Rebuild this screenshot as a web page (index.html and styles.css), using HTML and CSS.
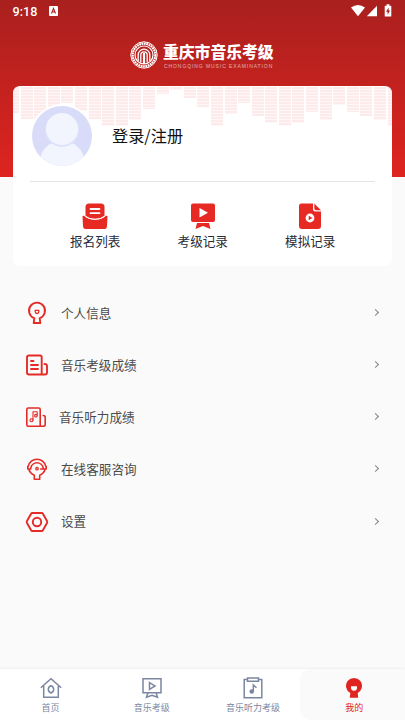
FILE: index.html
```
<!DOCTYPE html>
<html lang="zh-CN">
<head>
<meta charset="utf-8">
<title>我的</title>
<link rel="stylesheet" href="styles.css">
</head>
<body>
<header class="hero">
  <div class="status">
    <span class="time">9:18</span>
    <svg class="ime" width="9" height="10" viewBox="0 0 9 10"><rect width="9" height="10" rx="1" fill="#fff"/><path d="M2.5 7.5 4.5 2.5l2 5M3.2 6h2.600" fill="none" stroke="#aa2220" stroke-width="1.1"/></svg>
    <svg class="signals" width="42" height="14" viewBox="0 0 42 14" fill="#fff"><path d="M0 3.600Q7-1.400 14 3.600L7 12.200Z"/><path d="M26 1.800v10.400H15.800Z"/><path d="M35.600.3h2.800v1.400h1.300q.6 0 .6.6v9.600q0 .6-.6.6h-5.400q-.6 0-.6-.6V2.300q0-.6.6-.6h1.300Z"/><path d="M37.600 3.500 35 7.700h1.600v3l2.500-4.300h-1.500Z" fill="#aa2220"/></svg>
  </div>
  <div class="brand">
    <svg width="28" height="28" viewBox="0 0 28 28" fill="none" stroke="#fff"><circle cx="14" cy="14" r="13.200" stroke-width="1"/><circle cx="14" cy="14" r="11.300" stroke-width="2.200" stroke-dasharray="1.800 .6"/><circle cx="14" cy="14" r="9" stroke-width="1.200"/><path d="M8.200 20v-6a5.800 5.800 0 0 1 11.600 0v6M10.800 21.500V14a3.200 3.200 0 0 1 6.400 0v7.500" stroke-width="1.300"/><path d="M14 12v11" stroke-width="2.200"/></svg>
    <div class="wordmark"><span class="brand-cn">重庆市音乐考级</span><span class="brand-en">CHONGQING MUSIC EXAMINATION</span></div>
  </div>
</header>
<main>
  <section class="card">
    <div class="bars">
      <i style="height:26px"></i><i style="height:32px"></i><i style="height:32px"></i><i style="height:24px"></i><i style="height:16px"></i><i style="height:24px"></i><i style="height:32px"></i><i style="height:39px"></i><i style="height:39px"></i><i style="height:33px"></i><i style="height:22px"></i><i style="height:7px"></i><i style="height:3px"></i><i style="height:11px"></i><i style="height:20px"></i><i style="height:39px"></i><i style="height:27px"></i><i style="height:16px"></i><i style="height:29px"></i><i style="height:36px"></i><i style="height:39px"></i><i style="height:36px"></i><i style="height:25px"></i><i style="height:33px"></i><i style="height:18px"></i><i style="height:25px"></i><i style="height:29px"></i><i style="height:33px"></i><i style="height:39px"></i>
    </div>
    <div class="profile">
      <svg class="avatar" width="64" height="64" viewBox="0 0 64 64"><defs><clipPath id="face"><circle cx="32" cy="32" r="30"/></clipPath></defs><circle cx="32" cy="32" r="32" fill="#fff"/><circle cx="32" cy="32" r="30" fill="#d9dcf9"/><g clip-path="url(#face)"><ellipse cx="32" cy="57" rx="22" ry="20" fill="#f2f5fe"/><circle cx="32" cy="26" r="17" fill="#dfe3fa"/><circle cx="32" cy="25" r="16" fill="#f2f5fe"/></g></svg>
      <span class="login">登录/注册</span>
    </div>
    <div class="shortcuts">
      <div class="shortcut"><svg width="26" height="26" viewBox="0 0 26 26" fill="#e72924"><path d="M3.500 13V4q0-3.500 3.500-3.500h12Q22.500.5 22.500 4v9l-5.500 3H9Z"/><path d="M8.500 6h9M8.500 10.200h9" stroke="#fff" stroke-width="1.800" stroke-linecap="round"/><path d="M.5 13.500q0-1.200 1.600-.7Q6 16.700 13 16.700t10.900-3.900q1.600-.5 1.600.7L25 23q-.2 3-2.500 3h-19Q1.200 26 1 23Z"/><path d="M3 13Q7 16.200 13 16.200T23 13" fill="none" stroke="#fff" stroke-width="1"/></svg><span>报名列表</span></div>
      <div class="shortcut"><svg width="26" height="26" viewBox="0 0 26 26" fill="#e72924"><rect x="1" y=".5" width="24" height="18.500" rx="2"/><path d="M9.500 5 18 9.800l-8.500 4.800Z" fill="#fff"/><path d="M7 20h12l1.500 6L13 23l-7.500 3Z"/></svg><span>考级记录</span></div>
      <div class="shortcut"><svg width="26" height="26" viewBox="0 0 26 26" fill="#e72924"><path d="M4.500.5H16V6q0 2.500 2.500 2.500H24V23q0 3-3 3H5q-3 0-3-3V3Q2 .5 4.500.5Z"/><path d="M17.300.5 24 7.300h-4.700q-2 0-2-2Z"/><circle cx="13" cy="15" r="4.400" fill="#fff"/><path d="m11.700 12.700 3.700 2.300-3.700 2.300Z"/></svg><span>模拟记录</span></div>
    </div>
  </section>
  <nav class="menu">
    <a class="row"><svg viewBox="0 0 24 24"><path d="M9.300 17.200a8 8 0 1 1 5.400 0l.6 4.800H8.700l.6-4.800"/><path class="fine" d="M10.200 9.300h3.600v1.400a1.800 1.800 0 0 1-3.600 0Z"/></svg><span>个人信息</span><b></b></a>
    <a class="row"><svg viewBox="0 0 24 24"><path d="M4 2.500h11q1.700 0 1.700 1.700v17.300H4q-2 0-2-2V4.500q0-2 2-2ZM19.500 11q2.500 0 2.500 2v6.500q0 2-2 2h-3.300M6 8h2.500M6 12H13M6 16H13"/></svg><span>音乐考级成绩</span><b></b></a>
    <a class="row listen"><svg viewBox="0 0 22 24"><path class="mid" d="M3.200 3h10.500q1.500 0 1.500 1.500v16.700h-12Q1.800 21.200 1.800 19.700V4.500Q1.800 3 3.200 3ZM18.300 10.500q1.900 0 1.900 2v6.700q0 2-2 2h-3"/><path class="note" d="M8 15V6.800h4.200V10"/><circle class="note" cx="6.500" cy="15.200" r="1.500"/><circle class="note" cx="10.900" cy="10.700" r="1.300"/></svg><span>音乐听力成绩</span><b></b></a>
    <a class="row"><svg viewBox="0 0 24 24"><path class="mid" d="M4 12.500q.9 3.700 5.300 5.700V22.300h5.400v-4.100q4.400-2 5.300-5.700"/><path class="mid" d="M3.300 9.200a8.900 8.900 0 0 1 17.400 0M5.800 11a6.300 6.300 0 0 1 12.400 0M2.800 9.200v2.800h3M21.200 9.200v2.800h-5.500"/><circle class="fine" cx="12" cy="11.700" r="1.200"/></svg><span>在线客服咨询</span><b></b></a>
    <a class="row"><svg viewBox="0 0 24 24"><path d="M7.300 3h9.400q.8 0 1.200.7L22 11q.5 1 0 2l-4.100 7.300q-.4.700-1.200.7H7.300q-.8 0-1.200-.7L2 13q-.5-1 0-2l4.100-7.300Q6.500 3 7.300 3Z"/><circle cx="12" cy="12" r="4.200"/></svg><span>设置</span><b></b></a>
  </nav>
</main>
<footer class="tabs">
  <div class="tab"><svg viewBox="0 0 22 22"><path d="M3.700 9v11.300h14.600V9M.8 10.700 11 1.700l10.200 9"/><path d="M11 16q-2.700-1-2.700-3.700Q8.500 9.500 11 8.800q2.500.7 2.700 3.500Q13.700 15 11 16Z"/></svg><span>首页</span></div>
  <div class="tab"><svg viewBox="0 0 22 22"><path d="M2 1.800h18v14H2ZM8.500 5.500v6.800L14 8.900ZM7 15.500 5.500 20.200l5.500-2 5.500 2-1.500-4.700"/></svg><span>音乐考级</span></div>
  <div class="tab"><svg viewBox="0 0 22 22"><path d="M5.500 2.500H2.200v18.200h17.600V2.500h-3.300M5.500 1h11v3.200h-11Z"/><path d="M11.300 14.500V8l3.200 2.700"/><circle cx="9.700" cy="14.500" r="1.500" fill="#7b86a0"/></svg><span>音乐听力考级</span></div>
  <div class="tab active"><svg viewBox="0 0 22 22"><path d="M7.300 16A8 8 0 1 1 14.700 16l.5 4.800H6.800Z"/><path class="smile" d="M8 9.300h6v1.500a3 3 0 0 1-6 0Z"/></svg><span>我的</span></div>
</footer>
</body>
</html>
```
FILE: styles.css
```
* { box-sizing: border-box; }
body {
  margin: 0;
  width: 405px;
  height: 720px;
  display: flex;
  flex-direction: column;
  overflow: hidden;
  background: #fafafa;
  font-family: "Noto Sans CJK SC", sans-serif;
}
svg { display: block; flex: none; }
.hero {
  height: 177px;
  flex: none;
  background: linear-gradient(#a9201e, #de241f);
  color: #fff;
}
.status { display: flex; align-items: center; height: 22px; padding: 0 13px 0 12.5px; }
.time { font: 500 12.6px/22px Roboto, sans-serif; width: 36.5px; padding-top: 1px; }
.signals { margin-left: auto; margin-right: -1px; }
.brand { display: flex; gap: 5px; padding: 19px 0 0 130px; }
.wordmark { display: flex; flex-direction: column; }
.brand-cn { font-size: 15.8px; font-weight: 900; line-height: 21px; white-space: nowrap; }
.brand-en {
  font: 5px/6px "Liberation Sans", sans-serif;
  letter-spacing: .92px;
  opacity: .6;
  margin: 1px 0 0 1px;
  white-space: nowrap;
}
main { flex: 1; margin-top: -91px; }
.card {
  position: relative;
  height: 180px;
  margin: 0 13px;
  border-radius: 7px;
  background: #fff;
  overflow: hidden;
}
.bars {
  position: absolute;
  inset: 1px 0 auto -6px;
  display: flex;
  gap: 1.6px;
  align-items: flex-start;
}
.bars i {
  flex: none;
  width: 12px;
  background: repeating-linear-gradient(#fdeaea 0 2px, #fff7f7 2px 3px);
}
.profile {
  position: relative;
  display: flex;
  align-items: center;
  gap: 18px;
  height: 96px;
  margin: 0 17px;
  padding: 4px 0 0;
  border-bottom: 1px solid #e4e4e6;
}
.login { color: #111; font-size: 16.2px; line-height: 24px; margin-top: -1px; }
.shortcuts { display: grid; grid-template-columns: repeat(3, 107.5px); padding: 21px 0 0 28.5px; }
.shortcut { display: flex; flex-direction: column; align-items: center; gap: 2px; }
.shortcut span { color: #262c38; font-size: 12.6px; line-height: 19px; }
.menu { padding: 20.8px 25px 0; }
.row { display: flex; align-items: center; height: 52.2px; color: #4a4a4a; font-size: 12.6px; }
.row span { margin-top: -1.4px; }
.row svg {
  width: 24px;
  height: 24px;
  margin-right: 12px;
  fill: none;
  stroke: #e52b27;
  stroke-width: 1.9;
  stroke-linejoin: round;
  stroke-linecap: round;
}
.row svg .mid { stroke-width: 1.6; }
.row svg .fine { stroke-width: 1.3; }
.row svg .note { stroke-width: 1.1; }
.row.listen svg { width: 22px; }
.row b {
  width: 5px;
  height: 5px;
  margin: -1px 2.5px 0 auto;
  border: solid #858585;
  border-width: 1.2px 1.2px 0 0;
  transform: rotate(45deg);
}
.tabs {
  display: grid;
  grid-template-columns: repeat(4, 1fr);
  flex: none;
  height: 51px;
  background: #fff;
  box-shadow: 0 -1px 2px #0000000d;
}
.tab {
  display: flex;
  flex-direction: column;
  align-items: center;
  padding-top: 8px;
  color: #7b86a0;
}
.tab svg { width: 22px; height: 22px; fill: none; stroke: #7b86a0; stroke-width: 1.5; }
.tab span { font-size: 9px; line-height: 13px; margin-top: 2px; white-space: nowrap; }
.active { color: #e02420; background: #fafafa; border-radius: 10px 0 0 10px; margin-left: -4px; padding-left: 4px; }
.active svg { fill: #e02420; stroke: none; }
.active .smile { fill: #fff; }
```
